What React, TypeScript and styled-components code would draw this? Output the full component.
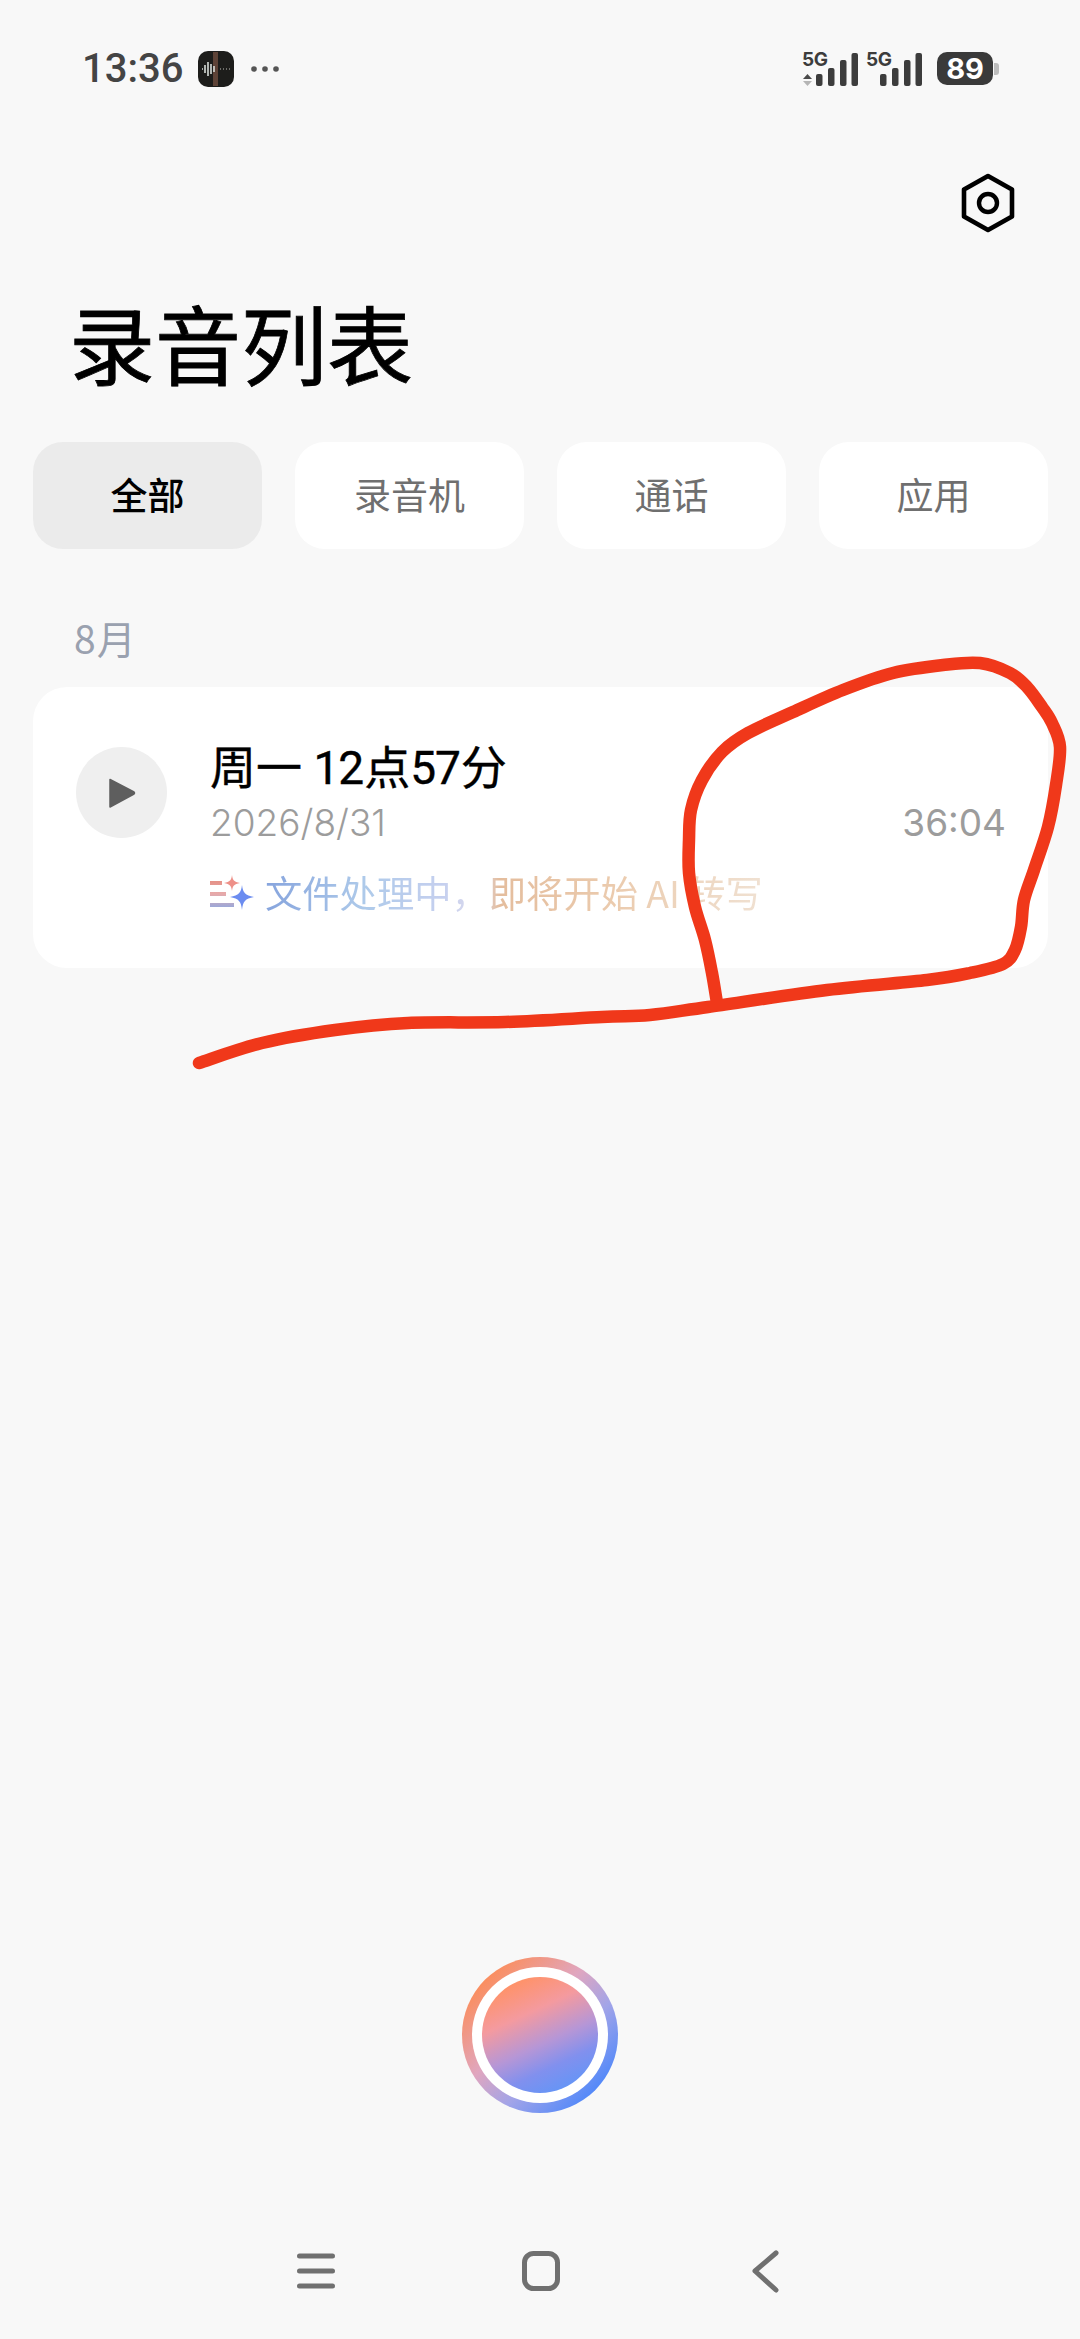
import React from "react";
import styled, { createGlobalStyle } from "styled-components";

const Global = createGlobalStyle`
  html, body { margin: 0; padding: 0; background: #f8f8f8; }
  * { box-sizing: border-box; }
  body { font-family: "Inter", "Noto Sans CJK SC", sans-serif; }
`;

const Page = styled.div`
  position: relative;
  width: 1080px;
  height: 2339px;
  background: #f8f8f8;
  display: flex;
  flex-direction: column;
  overflow: hidden;
`;

const StatusBar = styled.div`
  display: flex;
  align-items: center;
  justify-content: space-between;
  height: 54px;
  margin-top: 42px;
  padding: 0 81px 0 82px;
`;

const StatusLeft = styled.div`
  display: flex;
  align-items: center;
`;

const Time = styled.span`
  font-family: "Roboto", sans-serif;
  font-size: 40px;
  font-weight: 500;
  color: #444;
  line-height: 1;
`;

const AppBadge = styled.svg`
  width: 36px;
  height: 36px;
  margin-left: 15px;
`;

const MoreDots = styled.svg`
  width: 30px;
  height: 8px;
  margin-left: 16px;
`;

const StatusRight = styled.svg`
  width: 198px;
  height: 40px;
  display: block;
`;

const ActionRow = styled.div`
  display: flex;
  justify-content: flex-end;
  padding: 76px 61px 0 0;
`;

const HexIcon = styled.svg`
  width: 62px;
  height: 62px;
  display: block;
`;

const Title = styled.h1`
  margin: 53px 0 0 69px;
  font-family: "Noto Sans CJK SC", sans-serif;
  font-size: 86px;
  line-height: 110px;
  font-weight: 400;
  -webkit-text-stroke: 0.8px #000;
  color: #000;
`;

const Tabs = styled.div`
  display: grid;
  grid-template-columns: repeat(4, 229px);
  column-gap: 33px;
  margin: 45px 0 0 33px;
`;

const Tab = styled.div<{ $active?: boolean }>`
  height: 107px;
  padding-bottom: 3px;
  border-radius: 30px;
  display: flex;
  align-items: center;
  justify-content: center;
  font-family: "Noto Sans CJK SC", sans-serif;
  font-size: 37px;
  font-weight: ${(p) => (p.$active ? 500 : 400)};
  color: ${(p) => (p.$active ? "#000" : "#6f6f6f")};
  background: ${(p) => (p.$active ? "#ebebeb" : "#fff")};
`;

const Month = styled.div`
  margin: 62px 0 0 74px;
  font-family: "Noto Sans CJK SC", sans-serif;
  font-size: 39px;
  line-height: 52px;
  letter-spacing: 1px;
  color: #9aa1af;
`;

const Card = styled.div`
  margin: 24px 32px 0 33px;
  height: 281px;
  padding: 60px 42px 0 43px;
  background: #fff;
  border-radius: 34px;
  display: flex;
  align-items: flex-start;
`;

const PlayButton = styled.div`
  flex: none;
  width: 91px;
  height: 91px;
  border-radius: 50%;
  background: #efefef;
  display: flex;
  align-items: center;
  justify-content: center;
`;

const PlayIcon = styled.svg`
  width: 28px;
  height: 32px;
  display: block;
`;

const Body = styled.div`
  flex: 1;
  margin: -7px 0 0 43px;
  display: flex;
  flex-direction: column;
`;

const RecTitle = styled.div`
  font-family: "Roboto", "Noto Sans CJK SC", sans-serif;
  font-size: 46px;
  line-height: 56px;
  font-weight: 400;
  -webkit-text-stroke: 0.4px #000;
  color: #000;
  white-space: nowrap;
`;

const TitleDigits = styled.span`
  letter-spacing: -1px;
  margin-right: 1px;
`;

const MetaRow = styled.div`
  display: flex;
  justify-content: space-between;
  align-items: center;
  margin-top: 3px;
`;

const Meta = styled.span`
  font-family: "Inter", sans-serif;
  font-size: 37px;
  line-height: 48px;
  color: #9c9c9c;
  font-weight: 300;
`;

const Duration = styled(Meta)`
  font-weight: 400;
`;

const AiRow = styled.div`
  display: flex;
  align-items: center;
  margin-top: 21px;
`;

const AiIcon = styled.svg`
  width: 44px;
  height: 36px;
  display: block;
  flex: none;
`;

const AiText = styled.span`
  margin-left: 11px;
  font-family: "Noto Sans CJK SC", sans-serif;
  font-size: 37.3px;
  line-height: 48px;
  white-space: nowrap;
  background: linear-gradient(
    90deg,
    #86a4dd 0%,
    #aecaea 20%,
    #c6d0ef 36%,
    #dcdaec 43%,
    #e4bd9d 47%,
    #ebcbae 70%,
    #f0e1d2 100%
  );
  -webkit-background-clip: text;
  background-clip: text;
  color: transparent;
`;

const Spacer = styled.div`
  flex: 1;
`;

const RecordOuter = styled.div`
  align-self: center;
  width: 156px;
  height: 156px;
  padding: 10px;
  border-radius: 50%;
  background: linear-gradient(135deg, #ff8a4f 10%, #e0a6bf 42%, #a2a4e8 62%, #4b86fb 88%);
`;

const RecordRing = styled.div`
  width: 136px;
  height: 136px;
  padding: 10px;
  border-radius: 50%;
  background: #fff;
`;

const RecordCore = styled.div`
  width: 116px;
  height: 116px;
  border-radius: 50%;
  background: linear-gradient(155deg, #ff9268 12%, #f49a9f 34%, #b696d6 56%, #8190ee 72%, #5f96f8 92%);
`;

const NavBar = styled.div`
  display: grid;
  grid-template-columns: 44px 44px 30px;
  justify-content: space-between;
  align-items: center;
  padding: 0 301px 0 294px;
  margin: 133px 0 45px;
  height: 48px;
`;

const NavIcon = styled.svg`
  display: block;
  width: 100%;
  height: 48px;
`;

const Scribble = styled.svg`
  position: absolute;
  left: 0;
  top: 0;
  width: 1080px;
  height: 1100px;
  pointer-events: none;
`;

const pts: [number, number][] = [
  [199, 1063], [262, 1043], [335, 1030], [408, 1023], [505, 1022], [602, 1017], [650, 1015], [708, 1007],
  [827, 990], [927, 980], [970, 973], [1003, 964], [1015, 950], [1021, 927], [1024, 900],
  [1034, 870], [1048, 827], [1056, 785], [1060, 747], [1052, 723], [1042, 707], [1027, 687], [1010, 673],
  [980, 663], [943, 665], [893, 673], [843, 690], [793, 712], [748, 733], [722, 752], [702, 780], [691, 810],
  [689, 840], [689, 873], [695, 907], [705, 940], [712, 973], [717, 1003],
];

function smooth(p: [number, number][]) {
  let d = `M${p[0][0]} ${p[0][1]}`;
  for (let i = 0; i < p.length - 1; i++) {
    const a = p[Math.max(i - 1, 0)];
    const b = p[i];
    const c = p[i + 1];
    const e = p[Math.min(i + 2, p.length - 1)];
    d += ` C${b[0] + (c[0] - a[0]) / 6} ${b[1] + (c[1] - a[1]) / 6} ${c[0] - (e[0] - b[0]) / 6} ${c[1] - (e[1] - b[1]) / 6} ${c[0]} ${c[1]}`;
  }
  return d;
}

const Signal = ({ x, arrows }: { x: number; arrows?: boolean }) => (
  <g transform={`translate(${x} 0)`}>
    <text x="0" y="17" fontFamily="Inter, sans-serif" fontWeight="700" fontSize="19" fill="#3c3c3c" letterSpacing="-0.5">
      5G
    </text>
    {arrows && (
      <>
        <path d="M1 30 L5.5 25 L10 30 Z" fill="#4a4a4a" />
        <path d="M1 32 L5.5 37 L10 32 Z" fill="#b5b5b5" />
      </>
    )}
    <rect x="14" y="25" width="6.5" height="12" rx="2" fill="#3c3c3c" />
    <rect x="26" y="19" width="6.5" height="18" rx="2" fill="#3c3c3c" />
    <rect x="38" y="11" width="6.5" height="26" rx="2" fill="#3c3c3c" />
    <rect x="49.5" y="4" width="6.5" height="33" rx="2" fill="#3c3c3c" />
  </g>
);

export default function App() {
  return (
    <Page>
      <Global />
      <StatusBar>
        <StatusLeft>
          <Time>13:36</Time>
          <AppBadge viewBox="0 0 36 36">
            <rect width="36" height="36" rx="10" fill="#1d1d1b" />
            <rect x="15" y="1" width="5" height="34" fill="#5e4337" />
            <path d="M4 18h1M7 14v8M10 11v14M13 13v10M16 15v6" stroke="#d8dcd8" strokeWidth="1.6" />
            <path d="M22 18h1M25 18h1M28 18h1M31 18h1" stroke="#8b8b86" strokeWidth="1.6" />
          </AppBadge>
          <MoreDots viewBox="0 0 30 8">
            <circle cx="4" cy="4" r="2.8" fill="#555" />
            <circle cx="15" cy="4" r="2.8" fill="#555" />
            <circle cx="26" cy="4" r="2.8" fill="#555" />
          </MoreDots>
        </StatusLeft>
        <StatusRight viewBox="0 0 198 40">
          <Signal x={1} arrows />
          <Signal x={65} />
          <rect x="136" y="3" width="56" height="33" rx="10" fill="#3a3a3a" />
          <path d="M193 14h2a3 3 0 0 1 3 3v6a3 3 0 0 1-3 3h-2z" fill="#bdbdbd" />
          <text x="164" y="30" textAnchor="middle" fontFamily="Inter, sans-serif" fontWeight="700" fontSize="29" fill="#fff">
            89
          </text>
        </StatusRight>
      </StatusBar>

      <ActionRow>
        <HexIcon viewBox="0 0 62 62">
          <path d="M31 4 L55 17.5 V44.5 L31 58 L7 44.5 V17.5 Z" fill="none" stroke="#000" strokeWidth="4.6" strokeLinejoin="round" />
          <circle cx="31" cy="31" r="9" fill="none" stroke="#000" strokeWidth="4.4" />
        </HexIcon>
      </ActionRow>

      <Title>录音列表</Title>

      <Tabs>
        <Tab $active>全部</Tab>
        <Tab>录音机</Tab>
        <Tab>通话</Tab>
        <Tab>应用</Tab>
      </Tabs>

      <Month>8月</Month>

      <Card>
        <PlayButton>
          <PlayIcon viewBox="0 0 28 32">
            <path d="M2 2.5 L26 15 Q27 16 26 17 L2 30 Z" fill="#5e5e5e" stroke="#5e5e5e" strokeWidth="1.5" strokeLinejoin="round" />
          </PlayIcon>
        </PlayButton>
        <Body>
          <RecTitle>
            周一 <TitleDigits>12</TitleDigits>点<TitleDigits>57</TitleDigits>分
          </RecTitle>
          <MetaRow>
            <Meta>2026/8/31</Meta>
            <Duration>36:04</Duration>
          </MetaRow>
          <AiRow>
            <AiIcon viewBox="0 0 44 36">
              <defs>
                <linearGradient id="ln" x1="0" y1="0" x2="0" y2="1">
                  <stop offset="0" stopColor="#e59288" />
                  <stop offset="0.5" stopColor="#e7aaaa" />
                  <stop offset="1" stopColor="#9da8d8" />
                </linearGradient>
              </defs>
              <path d="M0 7h12v4H0zM0 18h16v4H0zM0 29h24v4H0z" fill="url(#ln)" />
              <path d="M32 11 C33 19 35 21 44 23 C35 25 33 27 32 36 C31 27 29 25 20 23 C29 21 31 19 32 11 Z" fill="#6b8cf0" />
              <path d="M22 1 C22.6 6 24 8 30 9 C24 10 22.6 12 22 17 C21.4 12 20 10 14 9 C20 8 21.4 6 22 1 Z" fill="#ee9088" />
            </AiIcon>
            <AiText>文件处理中，即将开始 AI 转写</AiText>
          </AiRow>
        </Body>
      </Card>

      <Spacer />

      <RecordOuter>
        <RecordRing>
          <RecordCore />
        </RecordRing>
      </RecordOuter>

      <NavBar>
        <NavIcon viewBox="0 0 44 48">
          <path d="M5.5 10h33M5.5 25h33M5.5 40h33" stroke="#707070" strokeWidth="5" strokeLinecap="round" />
        </NavIcon>
        <NavIcon viewBox="0 0 44 48">
          <rect x="2.5" y="7.5" width="33" height="35" rx="9" fill="none" stroke="#707070" strokeWidth="5" />
        </NavIcon>
        <NavIcon viewBox="0 0 30 48">
          <path d="M27 7 L6 25 L27 44" fill="none" stroke="#707070" strokeWidth="5" strokeLinecap="round" strokeLinejoin="round" />
        </NavIcon>
      </NavBar>

      <Scribble viewBox="0 0 1080 1100">
        <path d={smooth(pts)} fill="none" stroke="#f0381a" strokeWidth="12.5" strokeLinecap="round" strokeLinejoin="round" />
      </Scribble>
    </Page>
  );
}
